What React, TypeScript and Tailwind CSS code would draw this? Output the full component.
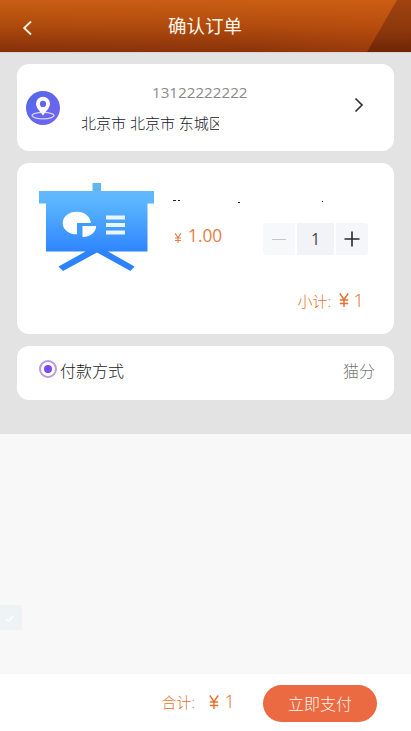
import type { ReactNode } from 'react';

function Header() {
  return (
    <header className="relative flex h-[52px] shrink-0 items-center overflow-hidden bg-linear-to-b from-[#c95f14] via-[#ae4a0d] to-[#85300a]">
      <svg className="absolute inset-0" width="411" height="52" viewBox="0 0 411 52" aria-hidden="true">
        <defs>
          <linearGradient id="glow" x1="0" y1="0" x2="1" y2="0">
            <stop offset="0" stopColor="#d85812" stopOpacity="0" />
            <stop offset="0.6" stopColor="#d85812" stopOpacity="0.1" />
            <stop offset="1" stopColor="#d85812" stopOpacity="0.4" />
          </linearGradient>
          <linearGradient id="facet" x1="0" y1="0" x2="0" y2="1">
            <stop offset="0" stopColor="#a0430f" />
            <stop offset="0.6" stopColor="#8c370b" />
            <stop offset="1" stopColor="#6f2506" />
          </linearGradient>
        </defs>
        <rect width="411" height="52" fill="url(#glow)" opacity="0.7" />
        <path d="M397 0H411V52H367Z" fill="url(#facet)" />
      </svg>
      <button className="relative ml-[21px] w-4 pt-[4px]" aria-label="返回">
        <svg width="13" height="16" viewBox="0 0 13 16" fill="none" stroke="#fff3e4" strokeWidth="1.8">
          <path d="M10 1.5L3.2 8L10 14.5" />
        </svg>
      </button>
      <h1 className="relative ml-[131px] text-[18.5px] leading-[26px] font-normal text-[#fff6ec]">确认订单</h1>
    </header>
  );
}

function Card({ className, children }: { className: string; children: ReactNode }) {
  return <section className={`flex w-[377px] rounded-[12px] bg-white ${className}`}>{children}</section>;
}

function PinBadge() {
  return (
    <svg width="34" height="34" viewBox="0 0 34 34" className="mt-[27px] ml-[9px] shrink-0" aria-hidden="true">
      <defs>
        <linearGradient id="pin" x1="0" y1="0" x2="1" y2="1">
          <stop offset="0" stopColor="#5268e8" />
          <stop offset="1" stopColor="#7563f3" />
        </linearGradient>
      </defs>
      <circle cx="17" cy="17" r="17" fill="url(#pin)" />
      <ellipse cx="17" cy="24.6" rx="11" ry="3.2" fill="none" stroke="#d4d4ff" strokeWidth="1.2" />
      <path
        fillRule="evenodd"
        fill="#fff"
        d="M17 5.8a7 7 0 0 0-7 7c0 4.5 4.2 7.2 7 12 2.8-4.8 7-7.5 7-12a7 7 0 0 0-7-7Zm0 4a3.1 3.1 0 1 1 0 6.2a3.1 3.1 0 0 1 0-6.2Z"
      />
    </svg>
  );
}

function BoardPicture() {
  return (
    <svg width="116" height="90" viewBox="0 0 116 90" className="mt-[19px] ml-[22px] shrink-0" aria-hidden="true">
      <defs>
        <linearGradient id="board" gradientUnits="userSpaceOnUse" x1="0" y1="8" x2="0" y2="72">
          <stop offset="0" stopColor="#62bbff" />
          <stop offset="0.2" stopColor="#5ab4ff" />
          <stop offset="1" stopColor="#2c83ff" />
        </linearGradient>
      </defs>
      <rect x="53.5" y="1" width="8.5" height="10" fill="#62b6ef" />
      <path
        d="M0 9H115V21.500H108.500V69.500H69L95.500 84.500L91.500 89L58 70.500L24 89L19.500 84.500L46.500 69.500H7V21.500H0Z"
        fill="url(#board)"
      />
      <path d="M51.700 41A14 11.300 0 1 0 38 52.300V41Z" fill="#fff" />
      <path d="M38 41H52V43.500H43V52.500H38Z" fill="#3f9cff" />
      <path d="M43.500 44H57A13.500 10.500 0 0 1 43.500 55Z" fill="#fff" />
      <path d="M67 33.500H86V37.500H67ZM67 41H86V45H67ZM67 48.500H86V52.500H67Z" fill="#eaf6ff" />
    </svg>
  );
}

function Stepper() {
  return (
    <div className="flex h-8 w-[105px] gap-[2px]">
      <button className="flex w-8 items-center justify-center rounded-l-[4px] bg-[#f7f8fa]" aria-label="减少">
        <span className="h-px w-[14px] bg-[#c3c6c9]" />
      </button>
      <span className="flex w-[37px] items-center justify-center bg-[#f1f3f6] text-[16px] font-normal text-[#45484c]">1</span>
      <button className="flex w-8 items-center justify-center rounded-r-[4px] bg-[#f5f6f9]" aria-label="增加">
        <svg width="16" height="16" viewBox="0 0 16 16" stroke="#27292c" strokeWidth="1.6">
          <path d="M8 0.5V15.500M0.500 8H15.500" />
        </svg>
      </button>
    </div>
  );
}

function Yen({ className }: { className: string }) {
  return (
    <svg viewBox="0 0 10 14" fill="none" stroke="currentColor" className={className} aria-label="¥">
      <path d="M0.800 0.500L5 6.500L9.200 0.500M5 6.500V14M0.800 7H9.200M0.800 10.500H9.200" />
    </svg>
  );
}

export default function App() {
  return (
    <div className="flex h-[731px] w-[411px] flex-col overflow-hidden bg-[#f8f8f8] font-['Open_Sans','Noto_Sans_CJK_SC',sans-serif] font-light">
      <Header />
      <main className="flex h-[382px] shrink-0 flex-col gap-3 border-t border-[#d9d4d2] bg-[#e3e3e3] px-[17px] pt-[11px]">
        <Card className="h-[87px]">
          <PinBadge />
          <div className="ml-[21px] w-[138px] pt-[16px]">
            <p className="pl-[71px] text-[15.2px] leading-[24px] font-normal text-[#8a8a8a]">13122222222</p>
            <p className="mt-[8px] overflow-hidden text-[15px] leading-[22px] whitespace-nowrap text-[#17172b]">
              北京市 北京市 东城区
            </p>
          </div>
          <svg className="mt-[33px] ml-[131px]" width="16" height="16" viewBox="0 0 16 16" fill="none" stroke="#333" strokeWidth="1.7">
            <path d="M5.500 1.500L12 8L5.500 14.500" />
          </svg>
        </Card>

        <Card className="h-[171px]">
          <BoardPicture />
          <div className="ml-[15px] flex w-[198px] flex-col">
            <div className="mt-[37px] flex h-[3px] items-start" aria-hidden="true">
              <span className="ml-[3px] h-px w-[3px] bg-[#222]" />
              <span className="ml-[2px] h-px w-[2px] bg-[#222]" />
              <span className="mt-[2px] ml-[58px] h-px w-[2px] bg-[#222]" />
              <span className="mt-px ml-[82px] h-px w-px bg-[#222]" />
            </div>
            <div className="mt-5 flex justify-between">
              <p className="flex h-[26px] items-center text-[17.3px] font-normal text-[#e57e46]">
                <Yen className="mt-[3px] mr-[6px] ml-1 h-[10px] w-2 stroke-[1.5]" />
                1.00
              </p>
              <Stepper />
            </div>
            <div className="mt-[31px] flex h-7 items-center justify-end pr-1 text-[#e8702c]">
              <span className="mr-[8px] pt-[2px] text-[15px]">小计:</span>
              <Yen className="mr-[4px] h-[14px] w-[10px] stroke-[1.5]" />
              <span className="text-[19px]">1</span>
            </div>
          </div>
        </Card>

        <Card className="h-[54px] items-center pr-[19px] pl-[22px]">
          <span className="mb-[8px] flex size-[18px] items-center justify-center rounded-full border-2 border-[#b39be9]">
            <span className="size-2 rounded-full bg-[#7a49f4]" />
          </span>
          <span className="mb-[4px] ml-[3px] text-[16px] text-[#202020]">付款方式</span>
          <span className="mb-[4px] ml-auto text-[16px] text-[#777]">猫分</span>
        </Card>
      </main>

      <div className="flex flex-1 items-start pt-[171px]" aria-hidden="true">
        <div className="flex h-[25px] w-[22px] items-center rounded-r-[3px] border-4 border-l-0 border-[#f0f1f1] bg-[#eef4f6]">
          <svg width="16" height="12" viewBox="0 0 16 12" fill="none" stroke="#fafdff" strokeWidth="2">
            <path d="M6 7L9 9L13 4" />
          </svg>
        </div>
      </div>

      <footer className="flex h-[57px] shrink-0 items-start justify-end bg-white pt-[11px] pr-[34px]">
        <div className="mr-[28px] flex h-[33px] items-center text-[#e8702c]">
          <span className="mr-[14px] pt-[2px] text-[15px]">合计:</span>
          <Yen className="mr-[5px] h-[14px] w-[10px] stroke-[1.4]" />
          <span className="text-[19px]">1</span>
        </div>
        <button className="h-[37px] w-[114px] rounded-full bg-[#eb6a42] text-[16px] text-[#fff5ee]">
          立即支付
        </button>
      </footer>
    </div>
  );
}
